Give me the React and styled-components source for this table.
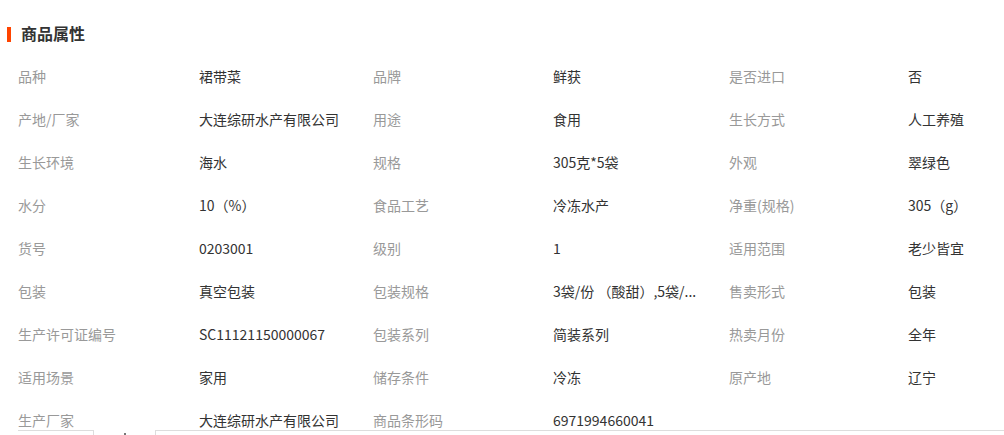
import styled, { createGlobalStyle } from "styled-components"

const GlobalStyle = createGlobalStyle`
  html, body {
    margin: 0;
    padding: 0;
    background: #fff;
  }
  body {
    font-family: "Microsoft YaHei", "Noto Sans CJK SC", sans-serif;
    overflow: hidden;
  }
`

const attrs = [
  ["品种", "裙带菜", "品牌", "鲜获", "是否进口", "否"],
  ["产地/厂家", "大连综研水产有限公司", "用途", "食用", "生长方式", "人工养殖"],
  ["生长环境", "海水", "规格", "305克*5袋", "外观", "翠绿色"],
  ["水分", "10（%）", "食品工艺", "冷冻水产", "净重(规格)", "305（g）"],
  ["货号", "0203001", "级别", "1", "适用范围", "老少皆宜"],
  ["包装", "真空包装", "包装规格", "3袋/份 （酸甜）,5袋/...", "售卖形式", "包装"],
  ["生产许可证编号", "SC11121150000067", "包装系列", "简装系列", "热卖月份", "全年"],
  ["适用场景", "家用", "储存条件", "冷冻", "原产地", "辽宁"],
  ["生产厂家", "大连综研水产有限公司", "商品条形码", "6971994660041", "", ""],
]

const App = () => {
  return (
    <Page>
      <GlobalStyle />
      <Title>商品属性</Title>
      <Grid>
        {attrs.map((row, i) =>
          row.map((cell, j) =>
            j % 2 === 0
              ? <Label key={i + "-" + j}>{cell}</Label>
              : <Value key={i + "-" + j}>{cell}</Value>
          )
        )}
      </Grid>
      <TabBar>
        <Tab />
        <TabGap><Dot /></TabGap>
        <TabRest />
      </TabBar>
    </Page>
  )
}

export default App

const Page = styled.div`
  position: relative;
  width: 1004px;
  height: 435px;
  overflow: hidden;
`

const Title = styled.h3`
  margin: 0;
  padding: 23px 0 0 21px;
  height: 22px;
  line-height: 21px;
  font-size: 16px;
  font-weight: bold;
  color: #333;
  position: relative;
  &::before{
    content: "";
    position: absolute;
    left: 7px;
    top: 27px;
    width: 4px;
    height: 15px;
    background: #ff4400;
  }
`

const Grid = styled.div`
  display: grid;
  grid-template-columns: 181px 174px 180px 176px 179px 1fr;
  grid-auto-rows: 43px;
  padding: 10px 0 0 18px;
`

const Label = styled.div`
  font-size: 14px;
  line-height: 43px;
  color: #999;
  white-space: nowrap;
`

const Value = styled.div`
  font-size: 14px;
  line-height: 43px;
  color: #333;
  white-space: nowrap;
  overflow: hidden;
`

const TabBar = styled.div`
  position: absolute;
  left: 18px;
  right: 0;
  top: 430px;
  height: 20px;
  display: flex;
  background: #fff;
`

const Tab = styled.div`
  width: 75px;
  border-top: 1px solid #ddd;
  border-right: 1px solid #ddd;
`

const TabGap = styled.div`
  width: 61px;
  padding: 3px 0 0 30px;
  box-sizing: border-box;
`

const Dot = styled.div`
  width: 2px;
  height: 2px;
  background: #777;
`

const TabRest = styled.div`
  flex: 1;
  border-top: 1px solid #ddd;
  border-left: 1px solid #ddd;
`
